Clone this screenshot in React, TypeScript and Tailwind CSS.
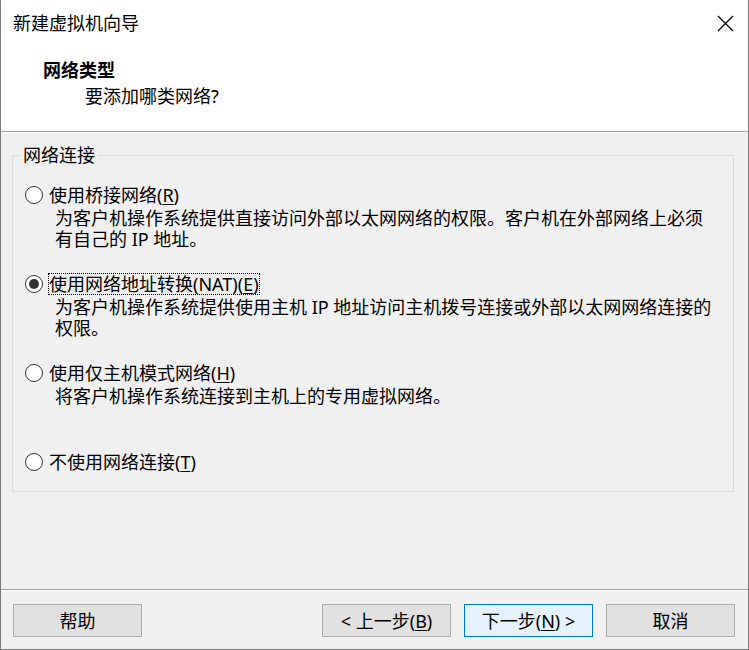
type NetworkOption = {
  id: string
  before: string
  hotkey: string
  after: string
  lines: string[]
  checked?: boolean
  focused?: boolean
}

const options: NetworkOption[] = [
  {
    id: 'bridged',
    before: '使用桥接网络(',
    hotkey: 'R',
    after: ')',
    lines: [
      '为客户机操作系统提供直接访问外部以太网网络的权限。客户机在外部网络上必须',
      '有自己的 IP 地址。',
    ],
  },
  {
    id: 'nat',
    before: '使用网络地址转换(NAT)(',
    hotkey: 'E',
    after: ')',
    lines: [
      '为客户机操作系统提供使用主机 IP 地址访问主机拨号连接或外部以太网网络连接的',
      '权限。',
    ],
    checked: true,
    focused: true,
  },
  {
    id: 'hostonly',
    before: '使用仅主机模式网络(',
    hotkey: 'H',
    after: ')',
    lines: ['将客户机操作系统连接到主机上的专用虚拟网络。'],
  },
  {
    id: 'none',
    before: '不使用网络连接(',
    hotkey: 'T',
    after: ')',
    lines: [],
  },
]

function Radio({ checked }: { checked?: boolean }) {
  return (
    <span className="flex h-[18px] w-[18px] shrink-0 items-center justify-center rounded-full border border-[#333333] bg-white">
      {checked ? <span className="h-[10px] w-[10px] rounded-full bg-[#333333]" /> : null}
    </span>
  )
}

function CloseIcon() {
  return (
    <svg width="17" height="17" viewBox="0 0 17 17" className="text-black">
      <path d="M1 1 L16 16 M16 1 L1 16" stroke="currentColor" strokeWidth="1.3" fill="none" />
    </svg>
  )
}

function OptionRow({ option, last }: { option: NetworkOption; last?: boolean }) {
  return (
    <div className={last ? 'flex flex-col' : 'flex h-[89px] flex-col'}>
      <div className="flex h-[24px] items-center pl-[12px]">
        <Radio checked={option.checked} />
        <span
          className={
            option.focused
              ? 'ml-[5px] whitespace-nowrap border border-dotted border-black leading-[20px]'
              : 'ml-[5px] whitespace-nowrap border border-transparent leading-[20px]'
          }
        >
          {option.before}
          <span className="underline underline-offset-2">{option.hotkey}</span>
          {option.after}
        </span>
      </div>
      {option.lines.length > 0 ? (
        <div className="mt-[1px] pl-[42px] leading-[21px]">
          {option.lines.map((line) => (
            <p key={line} className="whitespace-nowrap">
              {line}
            </p>
          ))}
        </div>
      ) : null}
    </div>
  )
}

function WizardButton({ children, primary }: { children: React.ReactNode; primary?: boolean }) {
  return (
    <button
      type="button"
      className={
        primary
          ? 'flex h-[33px] w-[129px] items-center justify-center border border-[#0078d7] bg-[#e5f1fb] leading-none text-black'
          : 'flex h-[33px] w-[129px] items-center justify-center border border-[#adadad] bg-[#e1e1e1] leading-none text-black'
      }
    >
      {children}
    </button>
  )
}

export default function App() {
  return (
    <div className="flex h-[650px] w-[749px] flex-col border-x border-b border-[#7a7a7a] bg-[#f0f0f0] font-['Noto_Sans','Noto_Sans_CJK_SC',sans-serif] text-[18px] text-black">
      <header className="h-[132px] shrink-0 border-b border-[#a0a0a0] bg-white">
        <div className="flex h-[46px] items-center justify-between pl-[12px] pr-[14px]">
          <span className="leading-[24px]">新建虚拟机向导</span>
          <CloseIcon />
        </div>
        <h1 className="mt-[12px] pl-[42px] font-bold leading-[24px]">网络类型</h1>
        <p className="mt-[2px] pl-[84px] leading-[24px]">要添加哪类网络?</p>
      </header>

      <main className="flex-1 pt-[12px] shadow-[inset_0_1px_0_#ffffff]">
        <fieldset className="ml-[11px] mr-[14px] border border-[#dcdcdc]">
          <legend className="ml-[7px] px-[3px] leading-[22px]">网络连接</legend>
          <div className="pb-[17px] pt-[17px]">
            {options.map((option, i) => (
              <OptionRow key={option.id} option={option} last={i === options.length - 1} />
            ))}
          </div>
        </fieldset>
      </main>

      <footer className="flex h-[60px] shrink-0 items-start justify-between border-t border-[#a0a0a0] pl-[12px] pr-[13px] pt-[14px] shadow-[inset_0_1px_0_#ffffff]">
        <WizardButton>帮助</WizardButton>
        <div className="flex gap-[13px]">
          <WizardButton>
            &lt; 上一步(<span className="underline underline-offset-2">B</span>)
          </WizardButton>
          <WizardButton primary>
            下一步(<span className="underline underline-offset-2">N</span>) &gt;
          </WizardButton>
          <WizardButton>取消</WizardButton>
        </div>
      </footer>
    </div>
  )
}
